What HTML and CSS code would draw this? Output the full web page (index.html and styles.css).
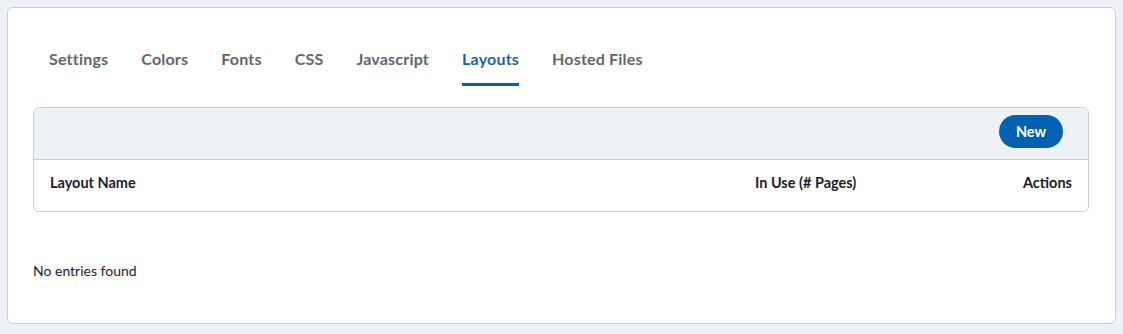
FILE: index.html
```html
<!DOCTYPE html>
<html lang="en">
<head>
    <meta charset="UTF-8">
    <meta name="viewport" content="width=device-width, initial-scale=1.0">
    <title>Layouts</title>
    <link rel="stylesheet" href="styles.css">
</head>
<body>
    <div class="card">
        <nav class="tabs">
            <a class="tab" href="#">Settings</a>
            <a class="tab" href="#">Colors</a>
            <a class="tab" href="#">Fonts</a>
            <a class="tab" href="#">CSS</a>
            <a class="tab" href="#">Javascript</a>
            <a class="tab active" href="#">Layouts</a>
            <a class="tab" href="#">Hosted Files</a>
        </nav>

        <div class="table-box">
            <div class="table-toolbar">
                <button type="button" class="btn-new">New</button>
            </div>
            <div class="table-head">
                <span>Layout Name</span>
                <span>In Use (# Pages)</span>
                <span class="col-actions">Actions</span>
            </div>
        </div>

        <p class="empty">No entries found</p>
    </div>
</body>
</html>
```

FILE: styles.css
```css
body {
    margin: 0;
    padding: 7px 7px 10px;
    background-color: #eef2f6;
    font-family: Lato, "Liberation Sans", sans-serif;
    color: #1b1c2e;
}

.card {
    height: 317px;
    box-sizing: border-box;
    background-color: #fff;
    border: 1px solid #c6ced8;
    border-radius: 6px;
    padding: 41px 26px 0 25px;
}

.tabs {
    display: flex;
    gap: 33px;
    padding-left: 16px;
}

.tab {
    font-size: 16px;
    line-height: 20px;
    font-weight: 700;
    letter-spacing: 0.2px;
    color: #5f666e;
    text-decoration: none;
    padding-bottom: 14px;
    border-bottom: 3px solid transparent;
}

.tab.active {
    color: #1e5fa8;
    border-bottom-color: #0062b0;
}

.table-box {
    margin-top: 21px;
    border: 1px solid #c6ced8;
    border-radius: 6px;
    overflow: hidden;
}

.table-toolbar {
    display: flex;
    justify-content: flex-end;
    background-color: #eff2f5;
    border-bottom: 1px solid #c6ced8;
    padding: 7px 25px 11px;
}

.btn-new {
    height: 33px;
    width: 64px;
    border: none;
    border-radius: 17px;
    background-color: #0062b1;
    color: #fff;
    font-family: inherit;
    font-size: 14.5px;
    font-weight: 700;
    cursor: pointer;
}

.table-head {
    display: grid;
    grid-template-columns: 705px 1fr auto;
    padding: 13px 16px 18px;
    font-size: 14.5px;
    line-height: 20px;
    font-weight: 700;
}

.col-actions {
    text-align: right;
}

.empty {
    margin: 50px 0 0;
    font-size: 14px;
    line-height: 18px;
}
```
